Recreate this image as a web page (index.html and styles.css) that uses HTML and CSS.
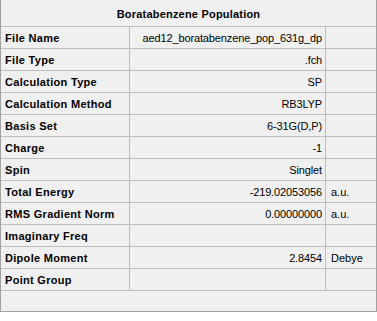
FILE: index.html
```
<!DOCTYPE html>
<html>
<head>
<meta charset="utf-8">
<link rel="stylesheet" href="styles.css">
</head>
<body>
<div class="panel">
  <div class="title">Boratabenzene Population</div>
  <div class="grid">
    <div class="lbl">File Name</div><div class="val">aed12_boratabenzene_pop_631g_dp</div><div class="unit"></div>
    <div class="lbl">File Type</div><div class="val">.fch</div><div class="unit"></div>
    <div class="lbl">Calculation Type</div><div class="val">SP</div><div class="unit"></div>
    <div class="lbl">Calculation Method</div><div class="val">RB3LYP</div><div class="unit"></div>
    <div class="lbl">Basis Set</div><div class="val">6-31G(D,P)</div><div class="unit"></div>
    <div class="lbl">Charge</div><div class="val">-1</div><div class="unit"></div>
    <div class="lbl">Spin</div><div class="val">Singlet</div><div class="unit"></div>
    <div class="lbl">Total Energy</div><div class="val">-219.02053056</div><div class="unit">a.u.</div>
    <div class="lbl">RMS Gradient Norm</div><div class="val">0.00000000</div><div class="unit">a.u.</div>
    <div class="lbl">Imaginary Freq</div><div class="val"></div><div class="unit"></div>
    <div class="lbl">Dipole Moment</div><div class="val">2.8454</div><div class="unit">Debye</div>
    <div class="lbl">Point Group</div><div class="val"></div><div class="unit"></div>
  </div>
  <div class="footer"></div>
</div>
</body>
</html>
```
FILE: styles.css
```
html, body {
  margin: 0;
  padding: 0;
  background: #ffffff;
}
body {
  font-family: "Liberation Sans", Arial, sans-serif;
  font-size: 11px;
  color: #000;
}
.panel {
  width: 377px;
  box-sizing: border-box;
  background: #f0f0f0;
  border-left: 1px solid #a0a0a0;
  border-right: 1px solid #a0a0a0;
  border-bottom: 1px solid #a0a0a0;
}
.title {
  height: 26px;
  line-height: 28px;
  overflow: hidden;
  text-align: center;
  font-weight: bold;
  letter-spacing: 0.2px;
  border-bottom: 1px solid #bdbdbd;
}
.grid {
  display: grid;
  grid-template-columns: 129px 196px 50px;
  grid-auto-rows: 22px;
}
.grid > div {
  box-sizing: border-box;
  border-bottom: 1px solid #bdbdbd;
  padding-top: 1px;
  line-height: 21px;
  white-space: nowrap;
  overflow: hidden;
}
.lbl {
  font-weight: bold;
  padding-left: 4px;
  letter-spacing: 0.3px;
  border-right: 1px solid #bdbdbd;
}
.val {
  text-align: right;
  padding-right: 3px;
  letter-spacing: -0.13px;
  border-right: 1px solid #bdbdbd;
}
.unit {
  padding-left: 5px;
}
.footer {
  height: 20px;
}
```
